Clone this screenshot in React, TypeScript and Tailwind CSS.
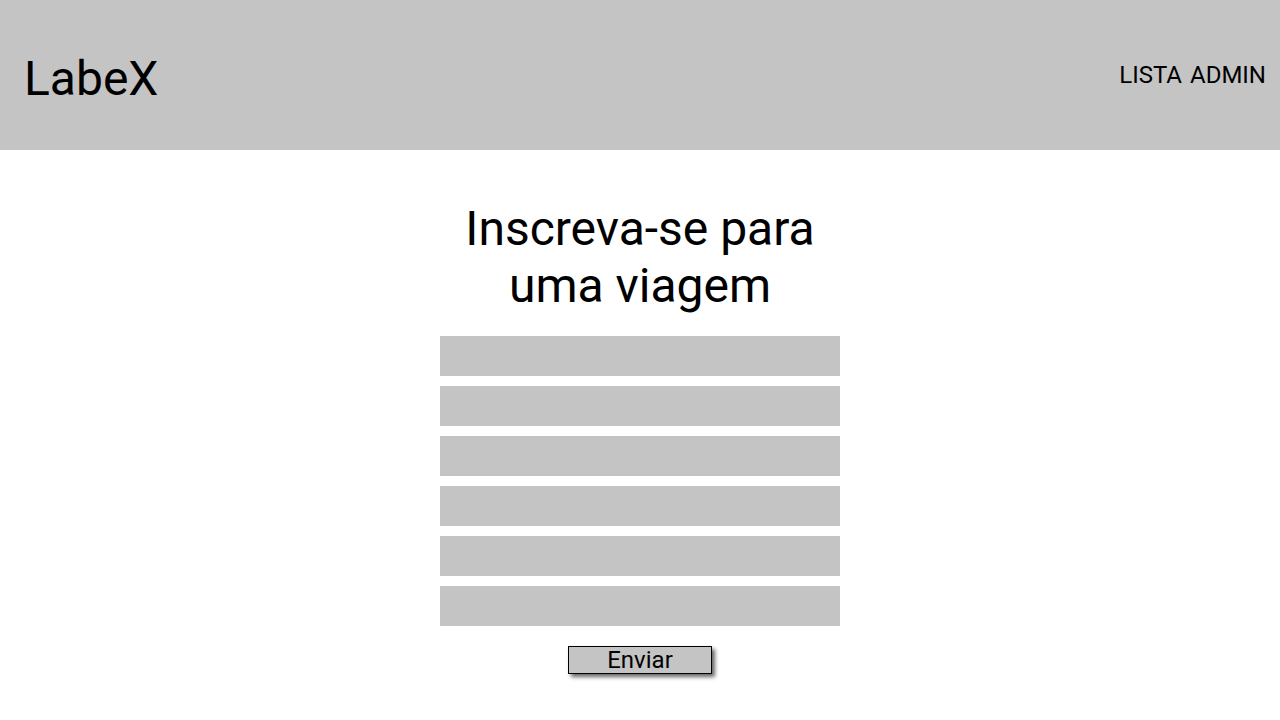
const fields = ["nome", "idade", "texto", "profissao", "pais", "viagem"];

export default function App() {
  return (
    <div className="min-h-screen bg-white font-['Roboto',sans-serif] text-black">
      <header className="flex h-[150px] items-center justify-between bg-[#c4c4c4] pl-6 pr-[14px]">
        <h1 className="pt-[6px] text-[48px] font-normal leading-[normal]">LabeX</h1>
        <nav className="flex gap-2 text-[24px] leading-[normal]">
          <span>LISTA</span>
          <span>ADMIN</span>
        </nav>
      </header>

      <main className="flex flex-col items-center">
        <h2 className="mt-[50px] w-[400px] text-center text-[48px] font-normal leading-[normal]">
          Inscreva-se para uma viagem
        </h2>
        <form className="mt-[22px] flex w-[400px] flex-col gap-[10px]">
          {fields.map((f) => (
            <input key={f} name={f} className="h-10 w-full bg-[#c4c4c4] outline-none" />
          ))}
          <button
            type="button"
            className="mx-auto mt-[10px] flex h-7 w-36 items-center justify-center border border-black bg-[#c4c4c4] text-[24px] leading-none shadow-[3px_3px_4px_rgba(0,0,0,0.6)]"
          >
            Enviar
          </button>
        </form>
      </main>
    </div>
  );
}
